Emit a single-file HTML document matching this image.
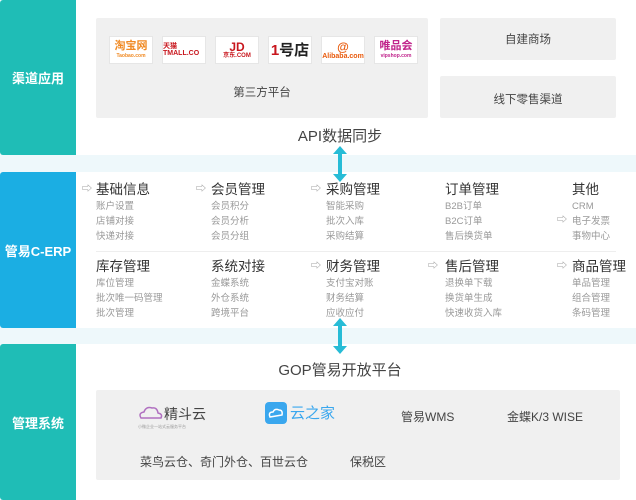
<!DOCTYPE html>
<html><head><meta charset="utf-8"><style>
*{margin:0;padding:0;box-sizing:border-box}
body{width:636px;height:500px;background:#eef8fb;position:relative;overflow:hidden;font-family:"Liberation Sans","Noto Sans CJK SC",sans-serif;color:#444}
.a{position:absolute}
.side{position:absolute;left:0;width:76px;color:#fff;font-size:13px;font-weight:bold;display:flex;align-items:center;justify-content:center;border-radius:3px 0 0 3px}
.panel{position:absolute;left:76px;right:0;background:#fff}
.gray{position:absolute;background:#f0f0f0;border-radius:2px}
.logo{position:absolute;top:36px;width:44px;height:28px;background:#fff;border:1px solid #e6e6e6;font-size:9px;display:flex;flex-direction:column;align-items:center;justify-content:center;line-height:1;font-weight:bold}
.h{position:absolute;font-size:13.5px;line-height:16px;color:#333}
.s{position:absolute;font-size:9.5px;color:#999;line-height:15px}
.ar{position:absolute;font-size:10px;line-height:16px;color:#888}
</style></head><body>
<div class="side" style="top:0;height:155px;background:#1fbdb6">渠道应用</div>
<div class="panel" style="top:0;height:155px"></div>
<div class="gray" style="left:96px;top:18px;width:332px;height:100px"></div>
<div class="gray" style="left:440px;top:18px;width:176px;height:42px"></div>
<div class="gray" style="left:440px;top:76px;width:176px;height:42px"></div>
<div class="a" style="left:440px;top:31px;width:176px;text-align:center;font-size:11.5px">自建商场</div>
<div class="a" style="left:440px;top:91px;width:176px;text-align:center;font-size:11.5px">线下零售渠道</div>
<div class="logo" style="left:109px;color:#f08a24"><span style="font-size:11px">淘宝网</span><span style="font-size:5px;margin-top:2px">Taobao.com</span></div>
<div class="logo" style="left:162px;color:#c8161d;font-size:7px">天猫 TMALL.CO</div>
<div class="logo" style="left:215px;color:#c8161d;font-size:12px">JD<span style="font-size:6px">京东.COM</span></div>
<div class="logo" style="left:268px;color:#222;font-size:15px"><span><b style="color:#c8161d">1</b>号店</span></div>
<div class="logo" style="left:321px;color:#e85a0c;font-size:7px"><span style="font-size:12px">@</span>Alibaba.com</div>
<div class="logo" style="left:374px;color:#c0238b"><span style="font-size:11px">唯品会</span><span style="font-size:5px;margin-top:2px">vipshop.com</span></div>
<div class="a" style="left:96px;top:84px;width:332px;text-align:center;font-size:11.5px">第三方平台</div>
<div class="a" style="left:240px;top:125px;width:200px;text-align:center;font-size:15px">API数据同步</div>

<div class="side" style="top:172px;height:156px;background:#1baee3">管易C-ERP</div>
<div class="panel" style="top:172px;height:156px"></div>
<div class="a" style="left:96px;top:251px;width:520px;height:1px;background:#eee"></div>

<div class="ar" style="left:82px;top:182px">⇨</div><div class="h" style="left:96px;top:182px">基础信息</div>
<div class="s" style="left:96px;top:199px">账户设置<br>店铺对接<br>快递对接</div>
<div class="ar" style="left:196px;top:182px">⇨</div><div class="h" style="left:211px;top:182px">会员管理</div>
<div class="s" style="left:211px;top:199px">会员积分<br>会员分析<br>会员分组</div>
<div class="ar" style="left:311px;top:182px">⇨</div><div class="h" style="left:326px;top:182px">采购管理</div>
<div class="s" style="left:326px;top:199px">智能采购<br>批次入库<br>采购结算</div>
<div class="h" style="left:445px;top:182px">订单管理</div>
<div class="s" style="left:445px;top:199px">B2B订单<br>B2C订单<br>售后换货单</div>
<div class="h" style="left:572px;top:182px">其他</div>
<div class="s" style="left:572px;top:199px">CRM<br>电子发票<br>事物中心</div>
<div class="ar" style="left:557px;top:213px">⇨</div>

<div class="h" style="left:96px;top:259px">库存管理</div>
<div class="s" style="left:96px;top:276px">库位管理<br>批次唯一码管理<br>批次管理</div>
<div class="h" style="left:211px;top:259px">系统对接</div>
<div class="s" style="left:211px;top:276px">金蝶系统<br>外仓系统<br>跨境平台</div>
<div class="ar" style="left:311px;top:259px">⇨</div><div class="h" style="left:326px;top:259px">财务管理</div>
<div class="s" style="left:326px;top:276px">支付宝对账<br>财务结算<br>应收应付</div>
<div class="ar" style="left:428px;top:259px">⇨</div><div class="h" style="left:445px;top:259px">售后管理</div>
<div class="s" style="left:445px;top:276px">退换单下载<br>换货单生成<br>快速收货入库</div>
<div class="ar" style="left:557px;top:259px">⇨</div><div class="h" style="left:572px;top:259px">商品管理</div>
<div class="s" style="left:572px;top:276px">单品管理<br>组合管理<br>条码管理</div>

<div class="side" style="top:344px;height:156px;background:#1fbdb6">管理系统</div>
<div class="panel" style="top:344px;height:156px"></div>
<div class="a" style="left:240px;top:359px;width:200px;text-align:center;font-size:15px">GOP管易开放平台</div>
<div class="gray" style="left:96px;top:390px;width:524px;height:90px"></div>
<div class="a" style="left:138px;top:404px;font-size:14px;color:#444"><svg width="26" height="16" style="vertical-align:-2px"><path d="M3 13 Q0 8 6 7 Q8 1 14 3 Q19 2 20 8 Q25 9 23 13 Z" fill="none" stroke="#b070c0" stroke-width="1.5"/></svg>精斗云<div style="font-size:4px;color:#999">小微企业一站式云服务平台</div></div>
<div class="a" style="left:265px;top:402px;width:22px;height:22px;background:#3aa7ee;border-radius:4px"><svg width="22" height="22"><path d="M5 15 Q3 10 8 10 Q10 6 14 8 Q18 8 17 13 Z" fill="none" stroke="#fff" stroke-width="1.5"/></svg></div>
<div class="a" style="left:290px;top:402px;font-size:15px;color:#3aa7ee">云之家</div>
<div class="a" style="left:401px;top:408px;font-size:12px">管易WMS</div>
<div class="a" style="left:507px;top:408px;font-size:12px">金蝶K/3 WISE</div>
<div class="a" style="left:140px;top:453px;font-size:12px">菜鸟云仓、奇门外仓、百世云仓</div>
<div class="a" style="left:350px;top:453px;font-size:12px">保税区</div>

<svg class="a" style="left:332px;top:146px" width="16" height="36"><path d="M8 0 L15 8 H10 V28 H15 L8 36 L1 28 H6 V8 H1 Z" fill="#27bcd6"/></svg>
<svg class="a" style="left:332px;top:318px" width="16" height="36"><path d="M8 0 L15 8 H10 V28 H15 L8 36 L1 28 H6 V8 H1 Z" fill="#27bcd6"/></svg>
</body></html>
